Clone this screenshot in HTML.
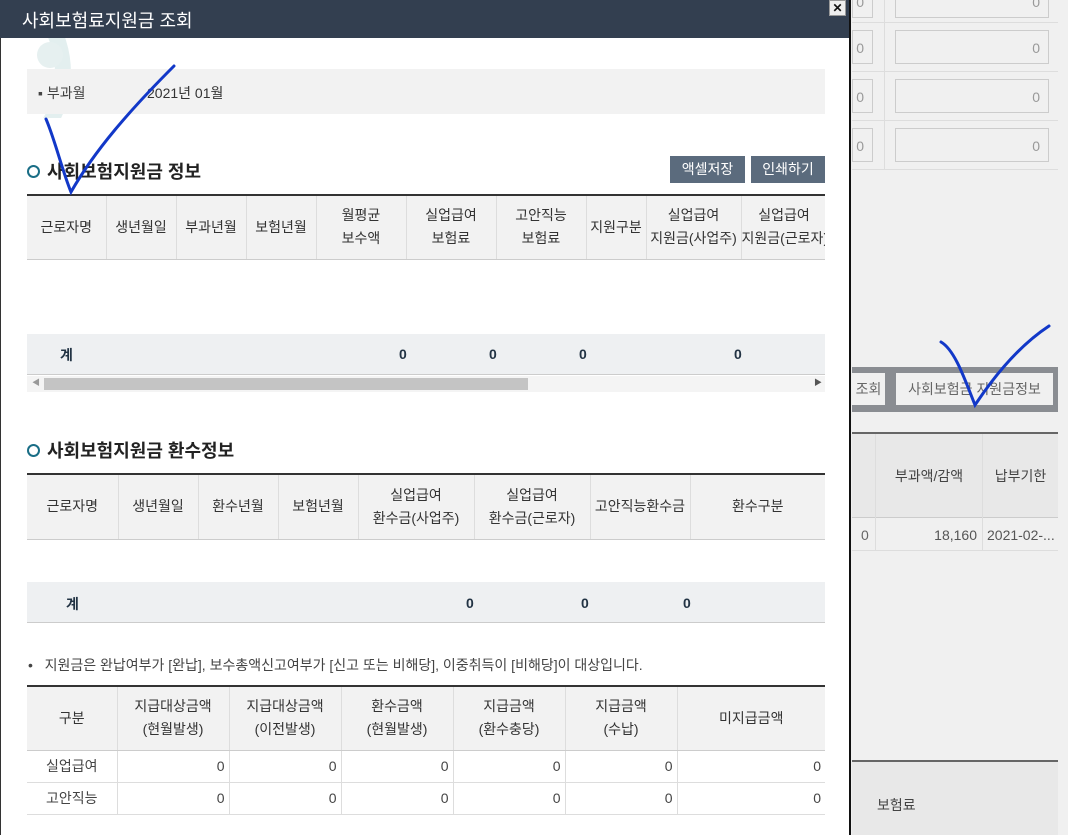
<!DOCTYPE html>
<html><head><meta charset="utf-8">
<style>
*{box-sizing:border-box;margin:0;padding:0}
body{width:1068px;height:835px;overflow:hidden;background:#f0f0f0;font-family:"Liberation Sans","Noto Sans CJK KR",sans-serif;font-size:14px;color:#333;position:relative}
.abs{position:absolute}
.modal{position:absolute;left:0;top:0;width:851px;height:835px;background:#fff;border-right:2px solid #111}
.title{position:absolute;left:0;top:0;width:849px;height:38px;background:#333f50;color:#fff;font-size:18px;padding:7px 0 0 22px}
table{border-collapse:collapse;table-layout:fixed;position:absolute;font-size:14px}
th{background:#f2f2f2;font-weight:normal;color:#333;border-left:1px solid #ddd;border-bottom:1px solid #ccc;line-height:23px;text-align:center;white-space:nowrap;overflow:hidden}
th:first-child{border-left:none}
td{border-left:1px solid #ddd;border-bottom:1px solid #ddd;text-align:right;padding-right:4px;color:#444}
td:first-child{border-left:none;text-align:center;padding:0}
.tot{position:absolute;background:#eef0f2;border-bottom:1px solid #ccc}
.z{position:absolute;color:#234;font-weight:bold;font-size:14px}
h2{position:absolute;font-size:18px;font-weight:bold;color:#222}
h2:before{content:"";position:absolute;left:-20px;top:7px;width:9px;height:9px;border:2.5px solid #1a6e86;border-radius:50%}
.btn{position:absolute;top:156px;height:27px;background:#5b6b7d;color:#fff;font-size:14px;line-height:27px;text-align:center}
.inp{position:absolute;background:#f0f0f0;border:1px solid #ccc;color:#999;text-align:right;padding-right:8px;font-size:14px}
</style></head><body>
<div class="abs" style="left:852px;top:0;width:206px;height:360px;">
 <div class="abs" style="left:0;top:22px;width:206px;border-top:1px solid #ddd"></div>
 <div class="abs" style="left:0;top:71px;width:206px;border-top:1px solid #ddd"></div>
 <div class="abs" style="left:0;top:120px;width:206px;border-top:1px solid #ddd"></div>
 <div class="abs" style="left:0;top:169px;width:206px;border-top:1px solid #ddd"></div>
 <div class="abs" style="left:32px;top:0;height:169px;border-left:1px solid #ddd"></div>
</div>
<div class="inp" style="left:852px;top:-16px;width:21px;height:34px;line-height:34px">0</div>
<div class="inp" style="left:895px;top:-16px;width:154px;height:34px;line-height:34px">0</div>
<div class="inp" style="left:852px;top:30px;width:21px;height:34px;line-height:34px">0</div>
<div class="inp" style="left:895px;top:30px;width:154px;height:34px;line-height:34px">0</div>
<div class="inp" style="left:852px;top:79px;width:21px;height:34px;line-height:34px">0</div>
<div class="inp" style="left:895px;top:79px;width:154px;height:34px;line-height:34px">0</div>
<div class="inp" style="left:852px;top:128px;width:21px;height:34px;line-height:34px">0</div>
<div class="inp" style="left:895px;top:128px;width:154px;height:34px;line-height:34px">0</div>
<div class="abs" style="left:852px;top:367px;width:206px;height:45px;background:#8a8d92"></div>
<div class="abs" style="left:852px;top:373px;width:33px;height:32px;background:#f0f0f0;color:#666;font-size:14px;line-height:32px;text-align:center">조회</div>
<div class="abs" style="left:896px;top:373px;width:157px;height:32px;background:#f0f0f0;color:#666;font-size:14px;line-height:32px;text-align:center">사회보험금 지원금정보</div>
<div class="abs" style="left:852px;top:432px;width:206px;border-top:2px solid #666"></div>
<div class="abs" style="left:852px;top:434px;width:206px;height:84px;background:#e8e8e8;border-bottom:1px solid #ccc"></div>
<div class="abs" style="left:875px;top:434px;height:117px;border-left:1px solid #ddd"></div>
<div class="abs" style="left:982px;top:434px;height:117px;border-left:1px solid #ddd"></div>
<div class="abs" style="left:876px;top:466px;width:106px;text-align:center;font-size:14px;color:#444">부과액/감액</div>
<div class="abs" style="left:983px;top:466px;width:75px;text-align:center;font-size:14px;color:#444">납부기한</div>
<div class="abs" style="left:852px;top:550px;width:206px;border-top:1px solid #ddd"></div>
<div class="abs" style="left:861px;top:527px;color:#666">0</div>
<div class="abs" style="left:876px;top:527px;width:101px;text-align:right;color:#555">18,160</div>
<div class="abs" style="left:987px;top:527px;color:#555">2021-02-...</div>
<div class="abs" style="left:852px;top:760px;width:206px;border-top:2px solid #666"></div>
<div class="abs" style="left:852px;top:762px;width:206px;height:73px;background:#e8e8e8"></div>
<div class="abs" style="left:877px;top:795px;font-size:14px;color:#444">보험료</div>

<div class="modal">
 <div class="abs" style="left:0;top:0;width:1px;height:835px;background:#333"></div>
 <div class="title">사회보험료지원금 조회</div>
 <div class="abs" style="left:1px;top:38px;width:85px;height:80px;overflow:hidden">
  <div class="abs" style="left:-60px;top:-50px;width:130px;height:170px;border-radius:50%;border:16px solid #e3efef;border-left-color:transparent;border-bottom-color:transparent"></div>
  <div class="abs" style="left:36px;top:4px;width:26px;height:26px;border-radius:50%;background:#e6f0f0"></div>
 </div>
 <div class="abs" style="left:27px;top:69px;width:798px;height:45px;background:#f2f2f2"></div>
 <div class="abs" style="left:38px;top:83px;color:#444">▪ 부과월</div>
 <div class="abs" style="left:147px;top:83px;color:#333">2021년 01월</div>

 <h2 style="left:47px;top:158px">사회보험지원금 정보</h2>
 <div class="btn" style="left:670px;width:75px">액셀저장</div>
 <div class="btn" style="left:751px;width:74px">인쇄하기</div>
 <div class="abs" style="left:27px;top:194px;width:798px;border-top:2px solid #333"></div>
 <div class="abs" style="left:27px;top:196px;width:798px;height:200px;overflow:hidden">
  <table style="left:0;top:0;width:900px">
   <colgroup><col style="width:79px"><col style="width:70px"><col style="width:70px"><col style="width:70px"><col style="width:90px"><col style="width:90px"><col style="width:90px"><col style="width:60px"><col style="width:95px"><col style="width:86px"><col style="width:100px"></colgroup>
   <tr style="height:63px"><th>근로자명</th><th>생년월일</th><th>부과년월</th><th>보험년월</th><th>월평균<br>보수액</th><th>실업급여<br>보험료</th><th>고안직능<br>보험료</th><th>지원구분</th><th>실업급여<br>지원금(사업주)</th><th>실업급여<br>지원금(근로자)</th><th></th></tr>
  </table>
  <div class="tot" style="left:0;top:138px;width:798px;height:41px"></div>
  <div class="z" style="left:33px;top:149px">계</div>
  <div class="z" style="left:372px;top:150px">0</div>
  <div class="z" style="left:462px;top:150px">0</div>
  <div class="z" style="left:552px;top:150px">0</div>
  <div class="z" style="left:707px;top:150px">0</div>
  <div class="abs" style="left:0;top:180px;width:798px;height:16px;background:#f4f4f4"></div>
  <div class="abs" style="left:17px;top:182px;width:484px;height:12px;background:#c4c4c4"></div>
  <div class="abs" style="left:5px;top:181px;font-size:8px;color:#999">◀</div>
  <div class="abs" style="left:787px;top:181px;font-size:8px;color:#555">▶</div>
 </div>

 <h2 style="left:47px;top:437px">사회보험지원금 환수정보</h2>
 <div class="abs" style="left:27px;top:473px;width:798px;border-top:2px solid #333"></div>
 <table style="left:27px;top:475px;width:798px">
  <colgroup><col style="width:91px"><col style="width:80px"><col style="width:80px"><col style="width:80px"><col style="width:116px"><col style="width:116px"><col style="width:100px"><col style="width:135px"></colgroup>
  <tr style="height:64px"><th>근로자명</th><th>생년월일</th><th>환수년월</th><th>보험년월</th><th>실업급여<br>환수금(사업주)</th><th>실업급여<br>환수금(근로자)</th><th>고안직능환수금</th><th>환수구분</th></tr>
 </table>
 <div class="tot" style="left:27px;top:582px;width:798px;height:41px"></div>
 <div class="z" style="left:66px;top:594px">계</div>
 <div class="z" style="left:466px;top:595px">0</div>
 <div class="z" style="left:581px;top:595px">0</div>
 <div class="z" style="left:683px;top:595px">0</div>

 <div class="abs" style="left:28px;top:655px;color:#444">•&nbsp;&nbsp; 지원금은 완납여부가 [완납], 보수총액신고여부가 [신고 또는 비해당], 이중취득이 [비해당]이 대상입니다.</div>
 <div class="abs" style="left:27px;top:685px;width:798px;border-top:2px solid #333"></div>
 <table style="left:27px;top:687px;width:798px">
  <colgroup><col style="width:90px"><col style="width:112px"><col style="width:112px"><col style="width:112px"><col style="width:112px"><col style="width:112px"><col style="width:148px"></colgroup>
  <tr style="height:63px"><th>구분</th><th>지급대상금액<br>(현월발생)</th><th>지급대상금액<br>(이전발생)</th><th>환수금액<br>(현월발생)</th><th>지급금액<br>(환수충당)</th><th>지급금액<br>(수납)</th><th>미지급금액</th></tr>
  <tr style="height:32px"><td>실업급여</td><td>0</td><td>0</td><td>0</td><td>0</td><td>0</td><td>0</td></tr>
  <tr style="height:32px"><td>고안직능</td><td>0</td><td>0</td><td>0</td><td>0</td><td>0</td><td>0</td></tr>
 </table>
</div>
<div class="abs" style="left:829px;top:0;width:17px;height:16px;background:#eee;border:1px solid #999;font-size:12px;font-weight:bold;line-height:14px;text-align:center;color:#111">✕</div>

<svg class="abs" style="left:0;top:0" width="1068" height="835">
 <path d="M46 119 C55 140 62 170 71 192 C95 150 130 110 174 66" fill="none" stroke="#1238c8" stroke-width="3" stroke-linecap="round"/>
 <path d="M941 342 C955 350 965 380 975 405 C995 375 1020 345 1049 326" fill="none" stroke="#1238c8" stroke-width="3" stroke-linecap="round"/>
</svg>
</body></html>
